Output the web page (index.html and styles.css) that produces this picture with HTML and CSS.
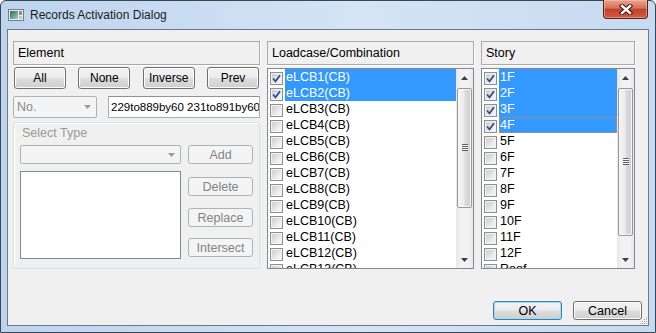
FILE: index.html
```html
<!DOCTYPE html>
<html lang="en">
<head>
  <meta charset="UTF-8" />
  <title>Records Activation Dialog</title>
  <link rel="stylesheet" href="styles.css">
</head>
<body>
  <div class="window">
    <div class="titlebar">
      <svg class="app-icon" width="16" height="12" viewBox="0 0 16 12">
        <defs>
          <linearGradient id="ig" x1="0" y1="0" x2="1" y2="1">
            <stop offset="0" stop-color="#2c6a56" />
            <stop offset="1" stop-color="#9fd2c2" />
          </linearGradient>
        </defs>
        <rect x="0.5" y="0.5" width="15" height="11" fill="#ececec" stroke="#7b7b7b" />
        <rect x="2" y="2" width="8" height="8" fill="url(#ig)" />
        <rect x="11" y="2" width="3" height="4" fill="#8c8c8c" />
        <rect x="11" y="7" width="3" height="3" fill="#c4c4c4" />
      </svg>
      <span class="title">Records Activation Dialog</span>
      <div class="close-btn">
        <svg width="14" height="11" viewBox="0 0 14 11">
          <path d="M3 2 L11 9 M11 2 L3 9" stroke="#3a1610" stroke-width="4.4" stroke-linecap="square" />
          <path d="M3 2 L11 9 M11 2 L3 9" stroke="#fff" stroke-width="2.4" stroke-linecap="square" />
        </svg>
      </div>
    </div>

    <div class="client">
      <div class="panes">
        <!-- Element -->
        <div class="pane pane-element">
          <div class="pane-head">Element</div>
          <div class="btn-row">
            <button class="btn">All</button>
            <button class="btn">None</button>
            <button class="btn">Inverse</button>
            <button class="btn">Prev</button>
          </div>
          <div class="no-row">
            <div class="combo combo-no disabled">
              <span>No.</span>
              <svg class="caret" width="7" height="4" viewBox="0 0 7 4"><path d="M0 0 L7 0 L3.5 4Z" fill="#9a9a9a" /></svg>
            </div>
            <div class="textbox">229to889by60 231to891by60</div>
          </div>
          <div class="group">
            <div class="group-label">Select Type</div>
            <div class="group-body">
              <div class="group-left">
                <div class="combo combo-type disabled">
                  <span></span>
                  <svg class="caret" width="7" height="4" viewBox="0 0 7 4"><path d="M0 0 L7 0 L3.5 4Z" fill="#9a9a9a" /></svg>
                </div>
                <div class="listbox"></div>
              </div>
              <div class="group-right">
                <button class="btn btn-small disabled">Add</button>
                <button class="btn btn-small disabled btn-delete">Delete</button>
                <button class="btn btn-small disabled btn-replace">Replace</button>
                <button class="btn btn-small disabled btn-intersect">Intersect</button>
              </div>
            </div>
          </div>
        </div>

        <!-- Loadcase/Combination -->
        <div class="pane pane-lc">
          <div class="pane-head">Loadcase/Combination</div>
          <div class="checklist">
            <div class="items">
              <div class="item sel"><span class="cb"><svg width="11" height="11" viewBox="0 0 11 11"><path d="M2 5.5 L4.5 8.3 L9 2.2" fill="none" stroke="#2f4a8c" stroke-width="1.7" /></svg></span><span class="label">eLCB1(CB)</span></div>
              <div class="item sel"><span class="cb"><svg width="11" height="11" viewBox="0 0 11 11"><path d="M2 5.5 L4.5 8.3 L9 2.2" fill="none" stroke="#2f4a8c" stroke-width="1.7" /></svg></span><span class="label">eLCB2(CB)</span></div>
              <div class="item"><span class="cb"></span><span class="label">eLCB3(CB)</span></div>
              <div class="item"><span class="cb"></span><span class="label">eLCB4(CB)</span></div>
              <div class="item"><span class="cb"></span><span class="label">eLCB5(CB)</span></div>
              <div class="item"><span class="cb"></span><span class="label">eLCB6(CB)</span></div>
              <div class="item"><span class="cb"></span><span class="label">eLCB7(CB)</span></div>
              <div class="item"><span class="cb"></span><span class="label">eLCB8(CB)</span></div>
              <div class="item"><span class="cb"></span><span class="label">eLCB9(CB)</span></div>
              <div class="item"><span class="cb"></span><span class="label">eLCB10(CB)</span></div>
              <div class="item"><span class="cb"></span><span class="label">eLCB11(CB)</span></div>
              <div class="item"><span class="cb"></span><span class="label">eLCB12(CB)</span></div>
              <div class="item"><span class="cb"></span><span class="label">eLCB13(CB)</span></div>
            </div>
            <div class="vscroll">
              <div class="arrow"><svg width="7" height="4" viewBox="0 0 7 4"><path d="M0 4 L3.5 0 L7 4Z" fill="#3f3f3f" /></svg></div>
              <div class="track"><div class="thumb thumb-lc"></div></div>
              <div class="arrow"><svg width="7" height="4" viewBox="0 0 7 4"><path d="M0 0 L7 0 L3.5 4Z" fill="#3f3f3f" /></svg></div>
            </div>
          </div>
        </div>

        <!-- Story -->
        <div class="pane pane-story">
          <div class="pane-head">Story</div>
          <div class="checklist">
            <div class="items">
              <div class="item sel"><span class="cb"><svg width="11" height="11" viewBox="0 0 11 11"><path d="M2 5.5 L4.5 8.3 L9 2.2" fill="none" stroke="#2f4a8c" stroke-width="1.7" /></svg></span><span class="label">1F</span></div>
              <div class="item sel"><span class="cb"><svg width="11" height="11" viewBox="0 0 11 11"><path d="M2 5.5 L4.5 8.3 L9 2.2" fill="none" stroke="#2f4a8c" stroke-width="1.7" /></svg></span><span class="label">2F</span></div>
              <div class="item sel"><span class="cb"><svg width="11" height="11" viewBox="0 0 11 11"><path d="M2 5.5 L4.5 8.3 L9 2.2" fill="none" stroke="#2f4a8c" stroke-width="1.7" /></svg></span><span class="label">3F</span></div>
              <div class="item sel focus"><span class="cb"><svg width="11" height="11" viewBox="0 0 11 11"><path d="M2 5.5 L4.5 8.3 L9 2.2" fill="none" stroke="#2f4a8c" stroke-width="1.7" /></svg></span><span class="label">4F</span></div>
              <div class="item"><span class="cb"></span><span class="label">5F</span></div>
              <div class="item"><span class="cb"></span><span class="label">6F</span></div>
              <div class="item"><span class="cb"></span><span class="label">7F</span></div>
              <div class="item"><span class="cb"></span><span class="label">8F</span></div>
              <div class="item"><span class="cb"></span><span class="label">9F</span></div>
              <div class="item"><span class="cb"></span><span class="label">10F</span></div>
              <div class="item"><span class="cb"></span><span class="label">11F</span></div>
              <div class="item"><span class="cb"></span><span class="label">12F</span></div>
              <div class="item"><span class="cb"></span><span class="label">Roof</span></div>
            </div>
            <div class="vscroll">
              <div class="arrow"><svg width="7" height="4" viewBox="0 0 7 4"><path d="M0 4 L3.5 0 L7 4Z" fill="#3f3f3f" /></svg></div>
              <div class="track"><div class="thumb thumb-story"></div></div>
              <div class="arrow"><svg width="7" height="4" viewBox="0 0 7 4"><path d="M0 0 L7 0 L3.5 4Z" fill="#3f3f3f" /></svg></div>
            </div>
          </div>
        </div>
      </div>

      <div class="footer">
        <button class="btn btn-dlg default">OK</button>
        <button class="btn btn-dlg">Cancel</button>
      </div>

      <svg class="grip" width="9" height="9" viewBox="0 0 9 9">
        <g fill="#a7a7a7">
          <rect x="7" y="1" width="1" height="1" /><rect x="5" y="3" width="1" height="1" /><rect x="7" y="3" width="1" height="1" />
          <rect x="3" y="5" width="1" height="1" /><rect x="5" y="5" width="1" height="1" /><rect x="7" y="5" width="1" height="1" />
          <rect x="1" y="7" width="1" height="1" /><rect x="3" y="7" width="1" height="1" /><rect x="5" y="7" width="1" height="1" /><rect x="7" y="7" width="1" height="1" />
        </g>
      </svg>
    </div>
  </div>
</body>
</html>
```

FILE: styles.css
```css
* {
  box-sizing: border-box;
}
body {
  margin: 0;
  font-family: "Liberation Sans", Arial, sans-serif;
  font-size: 12px;
  background: #fff;
}
.window {
  width: 656px;
  height: 333px;
  border: 1px solid #3a4653;
  border-radius: 6px 6px 0 0;
  background: linear-gradient(to right, #bcd4ee, #d4e4f5 55%, #c6daf0);
  display: flex;
  flex-direction: column;
}
.titlebar {
  height: 28px;
  flex-shrink: 0;
  display: flex;
  align-items: flex-start;
}
.app-icon {
  margin: 8px 0 0 7px;
}
.title {
  margin: 7px 0 0 6px;
  font-size: 12px;
  line-height: 15px;
  color: #1c1c1c;
}
.close-btn {
  margin: -1px 7px 0 auto;
  width: 45px;
  height: 19px;
  border: 1px solid #5b1f14;
  border-top: none;
  border-radius: 0 0 4px 4px;
  background: linear-gradient(#e8a593, #d87059 45%, #c3412a 52%, #d25a40);
  box-shadow: inset 0 0 0 1px rgba(255, 200, 190, 0.5);
  display: flex;
  align-items: center;
  justify-content: center;
}

.client {
  flex: 1;
  margin: 0 6px 6px;
  border: 1px solid #6c7885;
  background: #f0f0f0;
  display: flex;
  flex-direction: column;
  position: relative;
}
.panes {
  display: flex;
  gap: 7px;
  padding: 11px 0 0 5px;
}
.pane-element { width: 247px; }
.pane-lc { width: 207px; }
.pane-story { width: 154px; }

.pane-head {
  height: 24px;
  border: 1px solid #a9a9a9;
  box-shadow: 1px 1px 0 #fff;
  padding-left: 4px;
  line-height: 22px;
  font-size: 12.5px;
  color: #000;
}

/* buttons */
.btn {
  font-family: "Liberation Sans", Arial, sans-serif;
  font-size: 12px;
  color: #000;
  padding: 0;
  border: 1px solid #707070;
  border-radius: 3px;
  background: linear-gradient(#f2f2f2, #ebebeb 48%, #dddddd 52%, #cfcfcf);
  box-shadow: inset 0 0 0 1px #fbfbfb;
}
.btn.disabled {
  border-color: #adb2b5;
  background: #f4f4f4;
  box-shadow: none;
  color: #838383;
}
.btn-row {
  display: flex;
  justify-content: space-between;
  margin-top: 2px;
  padding: 0 1px;
}
.btn-row .btn {
  width: 52px;
  height: 22px;
}

.no-row {
  display: flex;
  justify-content: space-between;
  margin-top: 7px;
  height: 22px;
}
.combo {
  display: flex;
  align-items: center;
  justify-content: space-between;
  border: 1px solid #adb2b5;
  border-radius: 2px;
  background: #f4f4f4;
  color: #8a8a8a;
  padding: 0 5px 0 3px;
}
.combo-no {
  width: 84px;
  font-size: 12.5px;
}
.combo-type {
  height: 19px;
}
.textbox {
  width: 152px;
  border: 1px solid #abadb3;
  border-top-color: #8e9399;
  background: #fff;
  font-size: 11.5px;
  line-height: 20px;
  padding-left: 2px;
  white-space: nowrap;
  overflow: hidden;
}

.group {
  margin-top: 4px;
  height: 147px;
  border: 1px solid #d5dfe5;
  border-radius: 3px;
  box-shadow: inset 1px 1px 0 #fff;
  padding: 2px 6px 0;
}
.group-label {
  padding-left: 2px;
  line-height: 16px;
  font-size: 12.5px;
  color: #9a9a9a;
}
.group-body {
  display: flex;
  gap: 7px;
  margin-top: 4px;
}
.group-left {
  width: 161px;
}
.listbox {
  margin-top: 7px;
  height: 88px;
  border: 1px solid #828790;
  background: #fff;
}
.group-right {
  width: 65px;
  display: flex;
  flex-direction: column;
}
.btn-small {
  height: 19px;
  font-size: 12.5px;
}
.btn-delete { margin-top: 13px; }
.btn-replace { margin-top: 12px; }
.btn-intersect { margin-top: 11px; }

/* check lists */
.checklist {
  margin-top: 3px;
  height: 201px;
  border: 1px solid #828790;
  background: #fff;
  display: flex;
}
.items {
  flex: 1;
  overflow: hidden;
}
.item {
  height: 16px;
  display: flex;
  align-items: flex-start;
}
.cb {
  width: 13px;
  height: 13px;
  margin: 3px 2px 0;
  border: 1px solid #8e8f8f;
  background: linear-gradient(135deg, #c9c9c9, #eeeeee 70%, #f8f8f8);
  box-shadow: inset 0 0 0 1px #f2f2f2;
}
.cb svg {
  display: block;
}
.label {
  flex: 1;
  height: 16px;
  line-height: 16px;
  padding-left: 1px;
  font-size: 12.5px;
  color: #000;
  white-space: nowrap;
}
.item.sel .label {
  background: #3399ff;
  color: #fff;
}
.item.focus .label {
  outline: 1px dotted #e8862a;
  outline-offset: -1px;
}

.vscroll {
  width: 17px;
  display: flex;
  flex-direction: column;
  background: linear-gradient(to right, #e7e7e7, #f2f2f2 30%, #f2f2f2 70%, #e9e9e9);
}
.arrow {
  height: 17px;
  display: flex;
  align-items: center;
  justify-content: center;
}
.arrow svg {
  display: block;
}
.track {
  flex: 1;
}
.thumb {
  position: relative;
  margin: 2px 0 0 1px;
  width: 15px;
  border: 1px solid #979797;
  border-radius: 2px;
  background: linear-gradient(to right, #f4f4f4, #ececec 45%, #dcdcdc 55%, #cdcdcd);
  box-shadow: inset 0 0 0 1px #f8f8f8;
}
.thumb::after {
  content: "";
  position: absolute;
  left: 4px;
  top: 50%;
  width: 6px;
  height: 7px;
  margin-top: -4px;
  background: repeating-linear-gradient(#5f5f5f 0 1px, #f6f6f6 1px 2px);
}
.thumb-lc { height: 120px; }
.thumb-story { height: 148px; }

/* footer */
.footer {
  margin-top: auto;
  margin-bottom: 5px;
  padding-right: 6px;
  display: flex;
  justify-content: flex-end;
  gap: 11px;
}
.btn-dlg {
  width: 69px;
  height: 19px;
  font-size: 12.5px;
}
.btn-dlg.default {
  border-color: #3c7fb1;
  box-shadow: inset 0 0 0 1px #9fdcf7;
}
.grip {
  position: absolute;
  right: 0;
  bottom: 0;
}
```
